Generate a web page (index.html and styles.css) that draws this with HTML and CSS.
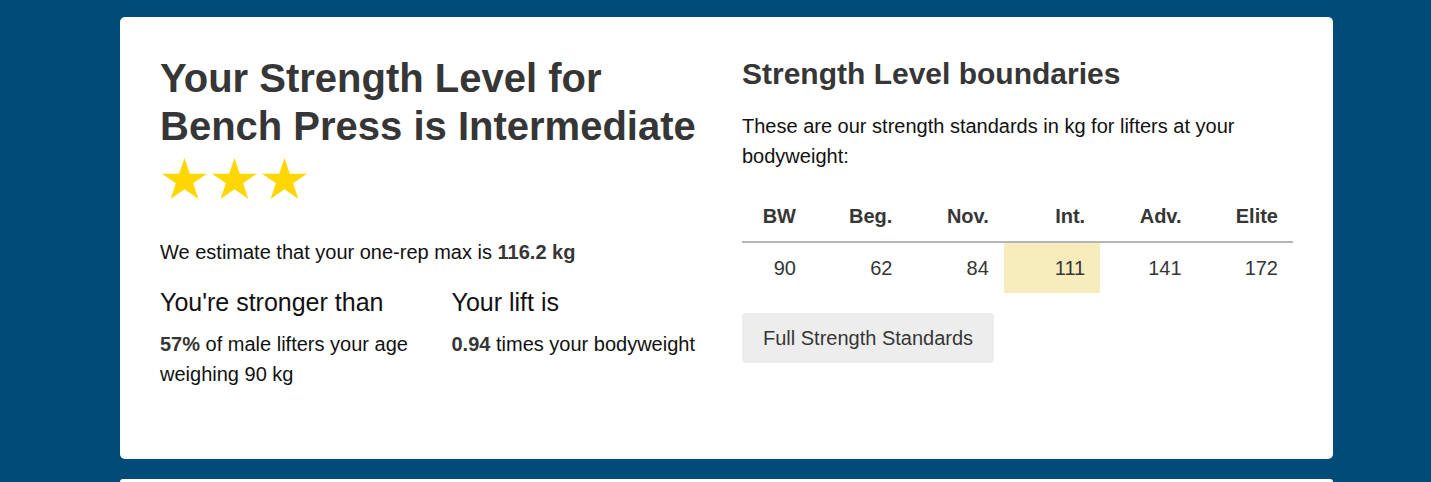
FILE: index.html
```html
<!DOCTYPE html>
<html lang="en">
<head>
    <meta charset="UTF-8">
    <meta name="viewport" content="width=device-width, initial-scale=1.0">
    <title>Bench Press Strength Level</title>
    <link rel="stylesheet" href="styles.css">
</head>
<body>
    <main class="page">
        <!-- Result card -->
        <section class="card">
            <div class="result-col">
                <h1 class="level-title">Your Strength Level for Bench Press is Intermediate</h1>
                <div class="stars">
                    <svg class="star" viewBox="0 0 100 95.2" preserveAspectRatio="none"><polygon points="50,0 61.8,36.35 100,36.35 69.1,58.8 80.9,95.2 50,72.7 19.1,95.2 30.9,58.8 0,36.35 38.2,36.35"/></svg>
                    <svg class="star" viewBox="0 0 100 95.2" preserveAspectRatio="none"><polygon points="50,0 61.8,36.35 100,36.35 69.1,58.8 80.9,95.2 50,72.7 19.1,95.2 30.9,58.8 0,36.35 38.2,36.35"/></svg>
                    <svg class="star" viewBox="0 0 100 95.2" preserveAspectRatio="none"><polygon points="50,0 61.8,36.35 100,36.35 69.1,58.8 80.9,95.2 50,72.7 19.1,95.2 30.9,58.8 0,36.35 38.2,36.35"/></svg>
                </div>
                <p class="estimate">We estimate that your one-rep max is <strong>116.2 kg</strong></p>
                <div class="facts">
                    <div class="fact">
                        <h3>You're stronger than</h3>
                        <p><strong>57%</strong> of male lifters your age weighing 90 kg</p>
                    </div>
                    <div class="fact">
                        <h3>Your lift is</h3>
                        <p><strong>0.94</strong> times your bodyweight</p>
                    </div>
                </div>
            </div>

            <div class="bounds-col">
                <h2 class="bounds-title">Strength Level boundaries</h2>
                <p class="bounds-text">These are our strength standards in kg for lifters at your bodyweight:</p>
                <table class="bounds-table">
                    <colgroup>
                        <col class="bw-col">
                        <col><col><col><col><col>
                    </colgroup>
                    <thead>
                        <tr>
                            <th>BW</th>
                            <th>Beg.</th>
                            <th>Nov.</th>
                            <th>Int.</th>
                            <th>Adv.</th>
                            <th>Elite</th>
                        </tr>
                    </thead>
                    <tbody>
                        <tr>
                            <td>90</td>
                            <td>62</td>
                            <td>84</td>
                            <td class="current">111</td>
                            <td>141</td>
                            <td>172</td>
                        </tr>
                    </tbody>
                </table>
                <a class="btn" href="#">Full Strength Standards</a>
            </div>
        </section>

        <!-- Next card (cut off) -->
        <section class="card card-next"></section>
    </main>
</body>
</html>
```

FILE: styles.css
```css
body {
    margin: 0;
    background: #004b78;
    font-family: "Liberation Sans", Arial, sans-serif;
    font-size: 20px;
    line-height: 1.5;
    color: #111;
    overflow: hidden;
}

.page {
    padding-top: 17px;
    margin-left: 120px;
    width: 1213px;
}

.card {
    background: white;
    border-radius: 5px;
    padding: 37px 40px 70px 40px;
    display: grid;
    grid-template-columns: 551px 551px;
    column-gap: 31px;
    align-items: start;
}

.card-next {
    margin-top: 20px;
    height: 3px;
    padding: 0;
    border-radius: 5px 5px 0 0;
}

h1, h2, h3, p {
    margin: 0;
}

strong {
    color: #363636;
    font-weight: bold;
}

.level-title {
    font-size: 40px;
    line-height: 48px;
    font-weight: bold;
    color: #363636;
}

.stars {
    display: flex;
    gap: 5px;
    margin-top: 8px;
    padding-left: 2px;
}

.star {
    width: 45px;
    height: 41px;
    fill: #ffd700;
}

.estimate {
    margin-top: 38px;
}

.facts {
    display: grid;
    grid-template-columns: 1fr 1fr;
    column-gap: 32px;
    margin-top: 20px;
}

.fact h3 {
    font-size: 25px;
    line-height: 31px;
    font-weight: normal;
}

.fact p {
    margin-top: 11px;
}

.bounds-title {
    margin-top: 3px;
    font-size: 30px;
    line-height: 1.125;
    font-weight: bold;
    color: #363636;
}

.bounds-text {
    margin-top: 20px;
}

.bounds-table {
    margin-top: 20px;
    width: 100%;
    table-layout: fixed;
    border-collapse: separate;
    border-spacing: 0;
    color: #363636;
}

.bw-col {
    width: 69px;
}

.bounds-table th,
.bounds-table td {
    padding: 10px 15px;
    text-align: right;
    line-height: 30px;
}

.bounds-table th {
    font-weight: bold;
    border-bottom: 2px solid #b5b5b5;
}

.bounds-table td.current {
    background: #f7ecbb;
}

.btn {
    display: inline-block;
    margin-top: 20px;
    padding: 10px 21px;
    line-height: 30px;
    background: #ededed;
    color: #363636;
    border-radius: 4px;
    text-decoration: none;
}
```
